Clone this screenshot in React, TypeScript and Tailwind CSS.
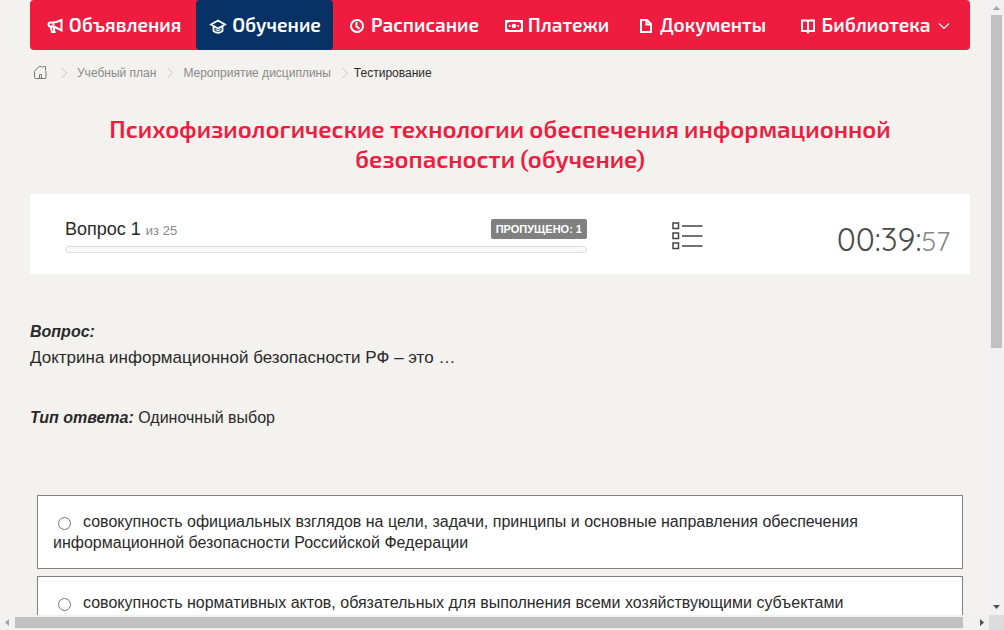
import type { ReactNode } from "react";

function Icon({ children }: { children: ReactNode }) {
  return (
    <svg viewBox="0 0 20 20" className="size-5 shrink-0" fill="none" stroke="currentColor" strokeWidth="2" aria-hidden="true">
      {children}
    </svg>
  );
}

const navItems = [
  {
    label: "Объявления",
    icon: (
      <Icon>
        <path d="M8.500 6.500H5.500a2 2 0 0 0 0 4H8.500zM8.500 6.500c3-.2 5-1 8-2.500v10.500c-3-1.700-5-3-8-4M5.500 10.500l1.500 5.500h2.500L8.500 11" />
      </Icon>
    ),
  },
  {
    label: "Обучение",
    active: true,
    icon: (
      <Icon>
        <path d="M3 8.500 10 4.500l7 4-7 4zM5.500 10.500v4.500c2 2.300 7 2.300 9 0v-4.500" strokeWidth="1.800" />
        <path d="M7.500 13.500l2.500 1.200 2.500-1.200" strokeWidth="1.200" />
      </Icon>
    ),
  },
  {
    label: "Расписание",
    icon: (
      <Icon>
        <circle cx="10" cy="10" r="6" />
        <path d="M9.500 6v4.500l3 2.200" strokeWidth="1.900" />
      </Icon>
    ),
  },
  {
    label: "Платежи",
    icon: (
      <Icon>
        <path d="M2 5h16v10H2z" />
        <path d="M2 4h5L2 8.500zM18 4h-5l5 4.500zM2 16v-4.500L7 16zM18 16v-4.500L13 16z" fill="currentColor" stroke="none" />
        <circle cx="10" cy="10" r="2.300" fill="currentColor" stroke="none" />
        <path d="M5 10h1.500M13.500 10H15" />
      </Icon>
    ),
  },
  {
    label: "Документы",
    icon: (
      <Icon>
        <path d="M5 4h6l4 4v8H5zM10.500 4v4.500H15" />
      </Icon>
    ),
  },
  {
    label: "Библиотека",
    menu: true,
    icon: (
      <Icon>
        <path d="M4 4.500h5l1 1 1-1h5V15h-5l-1 1.500L9 15H4zM10 5v11" strokeWidth="1.900" />
      </Icon>
    ),
  },
];

function Chevron() {
  return (
    <svg viewBox="0 0 8 12" className="h-3 w-2 shrink-0" fill="none" stroke="#c4c4c4" aria-hidden="true">
      <path d="M1.500 1 6.500 6l-5 5" />
    </svg>
  );
}

const answers = [
  "совокупность официальных взглядов на цели, задачи, принципы и основные направления обеспечения информационной безопасности Российской Федерации",
  "совокупность нормативных актов, обязательных для выполнения всеми хозяйствующими субъектами",
];

export default function App() {
  return (
    <div className="grid h-screen grid-cols-[minmax(0,1fr)_15px] grid-rows-[minmax(0,1fr)_15px] bg-[#f3f2ee] font-['Liberation_Sans',sans-serif] text-[#2a2a2a]">
      <div className="overflow-auto pl-[30px] pr-[19px] [scrollbar-width:none]">
        <header>
          <nav className="grid h-[50px] grid-cols-[166fr_137fr_160fr_127fr_162fr_188fr] rounded bg-[#ee1c3f] font-['Exo_2',Roboto,sans-serif] text-[19px] font-semibold text-white">
            {navItems.map((item) => (
              <a
                key={item.label}
                href="#"
                className={`flex items-center justify-center gap-1 whitespace-nowrap pt-px ${item.active ? "rounded bg-[#083166]" : ""}`}
              >
                {item.icon}
                <span>{item.label}</span>
                {item.menu && (
                  <svg viewBox="0 0 12 8" className="ml-1 mr-1 h-2 w-3" fill="none" stroke="currentColor" strokeWidth="1.200" aria-hidden="true">
                    <path d="m1 1.500 5 5 5-5" />
                  </svg>
                )}
              </a>
            ))}
          </nav>
          <nav aria-label="Навигация" className="flex h-[46px] items-center text-[12px] text-[#8a8a8a]">
            <a href="#" aria-label="Главная" className="ml-1 mr-3">
              <svg viewBox="0 0 14 14" className="size-3.5" fill="none" stroke="#777" aria-hidden="true">
                <path d="M1.500 12.500a1 1 0 0 1-1-1V5.500L5 .5h2.500l1 1 1-1h2v4l.5 1v6a1 1 0 0 1-1 1zM5.500 12V8.500h2V12" />
              </svg>
            </a>
            <Chevron />
            <a href="#" className="ml-[9px] mr-[10px]">Учебный план</a>
            <Chevron />
            <a href="#" className="ml-[9px] mr-[10px]">Мероприятие дисциплины</a>
            <Chevron />
            <span className="ml-[5px] text-[#2a2a2a]">Тестирование</span>
          </nav>
        </header>

        <main>
          <h1 className="mt-[18px] px-16 text-center font-['Exo_2',Roboto,sans-serif] text-[24px] leading-[30px] font-semibold text-[#ee1c3f]">
            Психофизиологические технологии обеспечения информационной безопасности (обучение)
          </h1>

          <section className="mt-5 flex h-20 items-center bg-white pt-1 pl-[35px] pr-5">
            <div className="w-[522px]">
              <div className="flex items-start justify-between">
                <p className="text-[18px] leading-5">
                  Вопрос 1 <span className="text-[13px] leading-none text-[#888]">из 25</span>
                </p>
                <span className="rounded-[2px] bg-[#808080] px-[5px] text-[11px] leading-5 font-bold text-white">ПРОПУЩЕНО: 1</span>
              </div>
              <div role="progressbar" aria-valuenow={0} aria-label="Прогресс" className="mt-[7px] h-[7px] rounded border border-[#ddd] bg-[#f8f8f8]" />
            </div>
            <button type="button" aria-label="Список вопросов" className="ml-[84px]">
              <svg viewBox="0 0 32 30" className="h-[30px] w-8" fill="none" stroke="#444" strokeWidth="1.500" aria-hidden="true">
                <path d="M2 2h5.500v5.500H2zM2 12h5.500v5.500H2zM2 22h5.500v5.500H2zM11 5h20.500M11 15h20.500M11 25h20.500" />
              </svg>
            </button>
            <div className="ml-auto pt-2 font-[Quicksand,Lato,sans-serif] text-[32px] leading-10 font-normal text-[#4c4c4c]">
              00:39:<span className="text-[27px] text-[#888]">57</span>
            </div>
          </section>

          <section className="mt-12">
            <h2 className="text-[16px] leading-5 font-bold italic">Вопрос:</h2>
            <p className="mt-[6px] text-[17px] leading-5">Доктрина информационной безопасности РФ – это …</p>
            <p className="mt-10 text-[16px] leading-5">
              <b className="italic">Тип ответа:</b> Одиночный выбор
            </p>
          </section>

          <div className="mx-[7px] mt-[67px] flex flex-col gap-[7px] text-[16px] leading-[21px]">
            {answers.map((answer) => (
              <label key={answer} className="block border border-[#808080] bg-white px-[15px] py-[15px]">
                <input type="radio" name="answer" className="mr-3 ml-[5px] size-[13px] align-[-3px]" />
                {answer}
              </label>
            ))}
          </div>
        </main>
      </div>

      <div aria-hidden="true" className="flex flex-col items-center bg-[#f1f1f1]">
        <svg viewBox="0 0 15 15" className="size-[15px]" fill="#a3a3a3"><path d="M4 10h7L7.500 6z" /></svg>
        <div className="h-[333px] w-[11px] bg-[#c1c1c1]" />
        <svg viewBox="0 0 15 15" className="mt-auto size-[15px]" fill="#505050"><path d="M4 5h7L7.500 9z" /></svg>
      </div>
      <div aria-hidden="true" className="flex items-center bg-[#f1f1f1]">
        <svg viewBox="0 0 15 15" className="size-[15px] shrink-0" fill="#a3a3a3"><path d="M9 4v7L5 7.500z" /></svg>
        <div className="mr-[11px] h-[11px] flex-1 bg-[#c1c1c1]" />
        <svg viewBox="0 0 15 15" className="size-[15px] shrink-0" fill="#505050"><path d="M6 4v7l4-3.500z" /></svg>
      </div>
      <div className="bg-[#dcdcdc]" />
    </div>
  );
}
